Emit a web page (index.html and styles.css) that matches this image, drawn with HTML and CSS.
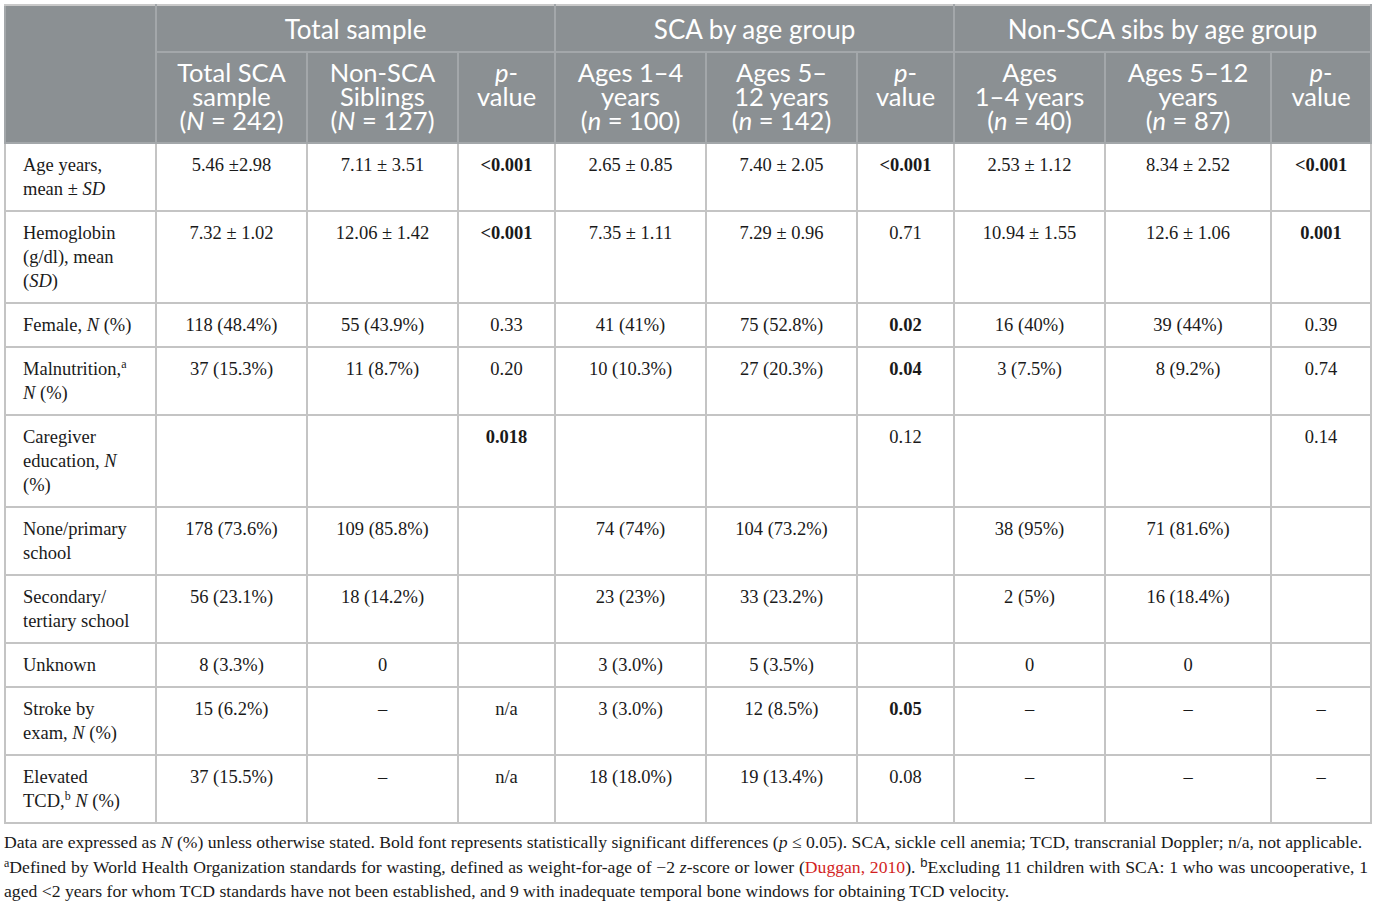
FILE: index.html
```html
<!DOCTYPE html>
<html lang="en">
<head>
  <meta charset="UTF-8">
  <title>Table 1 - Sample characteristics</title>
  <link rel="stylesheet" href="styles.css">
</head>
<body>

<div class="table-wrap">
  <table class="data-table">
    <colgroup>
      <col class="c-label">
      <col class="c-wide"><col class="c-wide"><col class="c-p">
      <col class="c-wide"><col class="c-wide"><col class="c-p">
      <col class="c-wide"><col class="c-wider"><col class="c-p2">
    </colgroup>
    <thead>
      <tr class="group-row">
        <th rowspan="2"></th>
        <th colspan="3">Total sample</th>
        <th colspan="3">SCA by age group</th>
        <th colspan="3">Non-SCA sibs by age group</th>
      </tr>
      <tr class="sub-row">
        <th>Total SCA<br>sample<br>(<i>N</i> = 242)</th>
        <th>Non-SCA<br>Siblings<br>(<i>N</i> = 127)</th>
        <th><i>p</i>-<br>value</th>
        <th>Ages 1–4<br>years<br>(<i>n</i> = 100)</th>
        <th>Ages 5–<br>12 years<br>(<i>n</i> = 142)</th>
        <th><i>p</i>-<br>value</th>
        <th>Ages<br>1–4 years<br>(<i>n</i> = 40)</th>
        <th>Ages 5–12<br>years<br>(<i>n</i> = 87)</th>
        <th><i>p</i>-<br>value</th>
      </tr>
    </thead>
    <tbody>
      <tr>
        <td class="label">Age years,<br>mean ± <i>SD</i></td>
        <td>5.46 ±2.98</td>
        <td>7.11 ± 3.51</td>
        <td class="sig">&lt;0.001</td>
        <td>2.65 ± 0.85</td>
        <td>7.40 ± 2.05</td>
        <td class="sig">&lt;0.001</td>
        <td>2.53 ± 1.12</td>
        <td>8.34 ± 2.52</td>
        <td class="sig">&lt;0.001</td>
      </tr>
      <tr>
        <td class="label">Hemoglobin<br>(g/dl), mean<br>(<i>SD</i>)</td>
        <td>7.32 ± 1.02</td>
        <td>12.06 ± 1.42</td>
        <td class="sig">&lt;0.001</td>
        <td>7.35 ± 1.11</td>
        <td>7.29 ± 0.96</td>
        <td>0.71</td>
        <td>10.94 ± 1.55</td>
        <td>12.6 ± 1.06</td>
        <td class="sig">0.001</td>
      </tr>
      <tr>
        <td class="label">Female, <i>N</i> (%)</td>
        <td>118 (48.4%)</td>
        <td>55 (43.9%)</td>
        <td>0.33</td>
        <td>41 (41%)</td>
        <td>75 (52.8%)</td>
        <td class="sig">0.02</td>
        <td>16 (40%)</td>
        <td>39 (44%)</td>
        <td>0.39</td>
      </tr>
      <tr>
        <td class="label">Malnutrition,<sup>a</sup><br><i>N</i> (%)</td>
        <td>37 (15.3%)</td>
        <td>11 (8.7%)</td>
        <td>0.20</td>
        <td>10 (10.3%)</td>
        <td>27 (20.3%)</td>
        <td class="sig">0.04</td>
        <td>3 (7.5%)</td>
        <td>8 (9.2%)</td>
        <td>0.74</td>
      </tr>
      <tr>
        <td class="label">Caregiver<br>education, <i>N</i><br>(%)</td>
        <td></td>
        <td></td>
        <td class="sig">0.018</td>
        <td></td>
        <td></td>
        <td>0.12</td>
        <td></td>
        <td></td>
        <td>0.14</td>
      </tr>
      <tr>
        <td class="label">None/primary<br>school</td>
        <td>178 (73.6%)</td>
        <td>109 (85.8%)</td>
        <td></td>
        <td>74 (74%)</td>
        <td>104 (73.2%)</td>
        <td></td>
        <td>38 (95%)</td>
        <td>71 (81.6%)</td>
        <td></td>
      </tr>
      <tr>
        <td class="label">Secondary/<br>tertiary school</td>
        <td>56 (23.1%)</td>
        <td>18 (14.2%)</td>
        <td></td>
        <td>23 (23%)</td>
        <td>33 (23.2%)</td>
        <td></td>
        <td>2 (5%)</td>
        <td>16 (18.4%)</td>
        <td></td>
      </tr>
      <tr>
        <td class="label">Unknown</td>
        <td>8 (3.3%)</td>
        <td>0</td>
        <td></td>
        <td>3 (3.0%)</td>
        <td>5 (3.5%)</td>
        <td></td>
        <td>0</td>
        <td>0</td>
        <td></td>
      </tr>
      <tr>
        <td class="label">Stroke by<br>exam, <i>N</i> (%)</td>
        <td>15 (6.2%)</td>
        <td>–</td>
        <td>n/a</td>
        <td>3 (3.0%)</td>
        <td>12 (8.5%)</td>
        <td class="sig">0.05</td>
        <td>–</td>
        <td>–</td>
        <td>–</td>
      </tr>
      <tr>
        <td class="label">Elevated<br>TCD,<sup>b</sup> <i>N</i> (%)</td>
        <td>37 (15.5%)</td>
        <td>–</td>
        <td>n/a</td>
        <td>18 (18.0%)</td>
        <td>19 (13.4%)</td>
        <td>0.08</td>
        <td>–</td>
        <td>–</td>
        <td>–</td>
      </tr>
    </tbody>
  </table>

  <div class="notes">
    <p>Data are expressed as <i>N</i> (%) unless otherwise stated. Bold font represents statistically significant differences (<i>p</i> ≤ 0.05). SCA, sickle cell anemia; TCD, transcranial Doppler; n/a, not applicable.</p>
    <p><sup>a</sup>Defined by World Health Organization standards for wasting, defined as weight-for-age of −2 <i>z</i>-score or lower (<a href="#">Duggan, 2010</a>). <sup class="sup-b">b</sup>Excluding 11 children with SCA: 1 who was uncooperative, 1 aged &lt;2 years for whom TCD standards have not been established, and 9 with inadequate temporal bone windows for obtaining TCD velocity.</p>
  </div>
</div>

</body>
</html>
```

FILE: styles.css
```css
body {
  margin: 0;
  background-color: #fff;
  font-family: "Liberation Serif", "Times New Roman", serif;
  color: #1a1a1a;
}

.table-wrap {
  padding: 4px 5px 0 4px;
}

.data-table {
  border-collapse: collapse;
  table-layout: fixed;
  width: 1364px;
  border: 2px solid #c9c9c9;
}

.c-label { width: 151px; }
.c-wide { width: 151px; }
.c-wider { width: 166px; }
.c-p { width: 97px; }
.c-p2 { width: 100px; }

.data-table th {
  background-color: #8b9093;
  color: #fff;
  font-family: Lato, "Liberation Sans", sans-serif;
  font-weight: normal;
  line-height: 24px;
  text-align: center;
  vertical-align: top;
  border: 2px solid #a3a7aa;
}

.group-row th {
  font-size: 26px;
  padding: 11px 2px 10px;
}

.sub-row th {
  font-size: 25.5px;
  padding: 7px 2px 10px;
}

.data-table thead tr:first-child th {
  border-top-color: #c9c9c9;
}

.data-table td {
  font-size: 18.5px;
  line-height: 24px;
  padding: 9px 8px;
  text-align: center;
  vertical-align: top;
  border: 2px solid #c4c4c4;
}

.data-table td.label {
  text-align: left;
  padding-left: 17px;
  padding-right: 10px;
}

.data-table td.sig {
  font-weight: bold;
}

.data-table sup {
  font-size: 12px;
  line-height: 0;
  vertical-align: baseline;
  position: relative;
  top: -7px;
}

.notes {
  width: 1364px;
  margin-top: 6px;
  font-size: 17.65px;
  line-height: 24.5px;
}

.notes p {
  margin: 0;
  text-align: justify;
}

.notes sup {
  font-size: 12px;
  line-height: 0;
  vertical-align: baseline;
  position: relative;
  top: -6px;
}

.notes .sup-b {
  font-family: "Liberation Sans", sans-serif;
  font-size: 13px;
}

.notes a {
  color: #d31f1f;
  text-decoration: none;
}
```
